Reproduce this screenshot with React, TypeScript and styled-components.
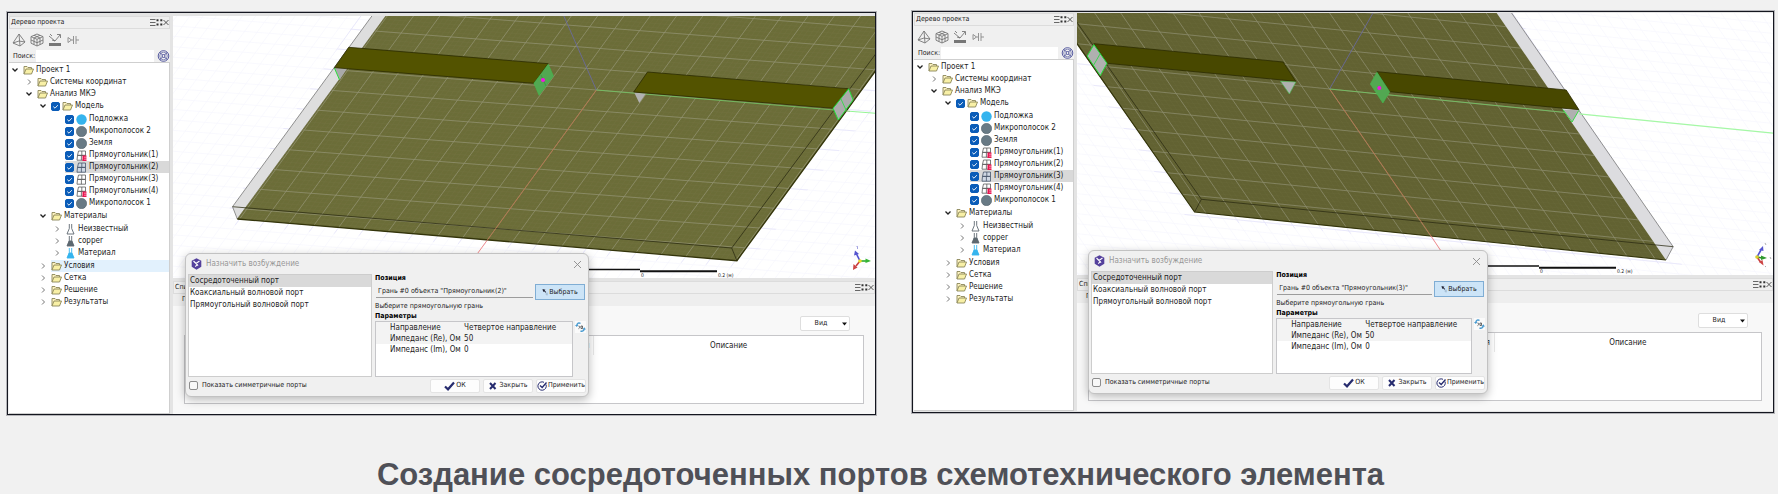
import React from "react";
import styled, { createGlobalStyle } from "styled-components";

const GlobalStyle = createGlobalStyle`
  * { box-sizing: border-box; }
  body { margin: 0; background: #f1f1f1; }
  ul { list-style: none; margin: 0; padding: 0; }
  button, input, select, table { font: inherit; color: inherit; }
`;

const uiFont = `"DejaVu Sans Condensed", Roboto, sans-serif`;

const Page = styled.main`
  padding: 11px 4px 0 7px;
  font-family: ${uiFont};
  font-size: 7px;
  line-height: 11px;
  color: #1c1c1c;
`;

const Windows = styled.div`
  display: grid;
  grid-template-columns: 869fr 862fr;
  column-gap: 36px;
  align-items: start;
`;

const Caption = styled.h1`
  margin: 42px 0 0;
  padding-right: 20px;
  text-align: center;
  font: bold 31px/36px "Liberation Sans", Arial, sans-serif;
  color: #4f5057;
`;

const AppWindow = styled.section<{ $first: boolean }>`
  position: relative;
  display: grid;
  grid-template-columns: ${(p) => (p.$first ? 162 : 161)}px 1fr;
  column-gap: 3px;
  margin-top: ${(p) => (p.$first ? 1 : 0)}px;
  padding: ${(p) => (p.$first ? "3px 0 0" : "1px 0")};
  border: 1px solid #14161f;
  box-shadow: 0 0 0 1px #b4b4b8;
  background: #e4e4e4;
`;

const Sidebar = styled.aside`
  display: flex;
  flex-direction: column;
  background: #f0f0f0;
  padding-left: 1px;
`;

const DockTitle = styled.header`
  display: flex;
  align-items: center;
  justify-content: space-between;
  height: 13px;
  padding: 0 0 0 1px;
  border: 1px solid #dcdcdc;
  background: #efefef;
`;

const DockName = styled.h2`
  margin: 0;
  font-size: 7px;
  line-height: 11px;
  font-weight: 400;
`;

const DockTools = styled.div`
  display: flex;
`;

const IconButton = styled.button`
  display: flex;
  padding: 0;
  border: 0;
  background: none;
`;

const Toolbar = styled.div`
  display: flex;
  align-items: center;
  gap: 4px;
  height: 21px;
  padding-left: 3px;
`;

const SearchRow = styled.div`
  display: flex;
  align-items: center;
  height: 12px;
  padding-left: 4px;
`;

const SearchInput = styled.input`
  flex: 1;
  min-width: 0;
  height: 12px;
  margin: 0 3px 0 1px;
  padding: 0 2px;
  border: 0;
  background: #fff;
`;

const Tree = styled.ul`
  flex: 1;
  padding: 1px 0 0 1px;
  border: 1px solid #cfcfcf;
  border-left: 0;
  background: #fff;
  font-size: 8px;
  line-height: 12px;
`;

const Branch = styled.ul<{ $deep: boolean }>`
  margin: ${(p) => (p.$deep ? 1 : 0)}px 0;
`;

const Node = styled.div<{ $level: number }>`
  display: flex;
  align-items: center;
  height: 12px;
  padding-left: ${(p) => p.$level * 14}px;
`;

const Chevron = styled.span`
  display: flex;
  width: 13px;
`;

const NodeBody = styled.label<{ $tone?: string }>`
  display: flex;
  flex: 1;
  align-items: center;
  gap: 2px;
  height: 12px;
  white-space: nowrap;
  background: ${(p) => p.$tone ?? "transparent"};
`;

const TickWrap = styled.span`
  position: relative;
  display: flex;
  width: 9px;
  height: 9px;
  svg { position: absolute; inset: 0; pointer-events: none; }
`;

const Tick = styled.input`
  appearance: none;
  width: 9px;
  height: 9px;
  margin: 0;
  border: 1px solid #8c8c8c;
  border-radius: 2px;
  background: #f8f8f8;
  &:checked { border-color: #0a5cb8; background: #0a5cb8; }
`;

const Workspace = styled.div`
  display: flex;
  flex-direction: column;
  min-width: 0;
`;

const SceneSvg = styled.svg`
  display: block;
  width: 100%;
  height: 262px;
  margin-bottom: 3px;
  background: #fff;
`;

const TabBand = styled.div`
  height: 12px;
  padding-left: 9px;
  background: #eeeeee;
`;

const DockBody = styled.div`
  display: flex;
  flex-direction: column;
  align-items: flex-end;
  gap: 4px;
  padding: 10px 11px;
  background: #f8f8f8;
`;

const ViewPicker = styled.span`
  position: relative;
  display: flex;
  margin-right: 14px;
  svg { position: absolute; right: 3px; top: 6px; pointer-events: none; }
`;

const ViewSelect = styled.select`
  appearance: none;
  width: 50px;
  height: 15px;
  padding: 0 8px 0 0;
  border: 1px solid #dedede;
  border-radius: 2px;
  background: #fff;
  text-align: center;
`;

const GridFrame = styled.div`
  width: 100%;
  height: 69px;
  border: 1px solid #c6c6c9;
  background: #fff;
`;

const DataTable = styled.table`
  width: 100%;
  table-layout: fixed;
  border-collapse: collapse;
  font-size: 8px;
  th { height: 19px; padding: 0 4px; font-weight: 400; }
  th:first-child { width: 60.3%; text-align: right; border-right: 1px solid #e8e8e8; }
`;

const Dialog = styled.div<{ $first: boolean }>`
  position: absolute;
  left: ${(p) => (p.$first ? 177 : 175)}px;
  top: ${(p) => (p.$first ? 240 : 238)}px;
  width: ${(p) => (p.$first ? 404 : 400)}px;
  padding: 0 2px 2px;
  border: 1px solid #c2c2c2;
  border-radius: 6px;
  background: #f0f0f0;
  box-shadow: 0 3px 10px rgba(0, 0, 0, 0.28);
`;

const DialogBar = styled.header`
  display: flex;
  align-items: center;
  gap: 4px;
  height: 20px;
  padding: 0 4px 0 3px;
`;

const DialogTitle = styled.h2`
  flex: 1;
  margin: 0;
  font-size: 8px;
  line-height: 12px;
  font-weight: 400;
  color: #979797;
`;

const DialogColumns = styled.div`
  display: grid;
  grid-template-columns: minmax(0, 185fr) minmax(0, 212fr);
  column-gap: 3px;
`;

const PortList = styled.ul`
  border: 1px solid #cdcdcd;
  background: #fff;
  font-size: 8px;
  line-height: 12px;
`;

const PortItem = styled.li<{ $active: boolean }>`
  height: 12px;
  padding-left: 1px;
  background: ${(p) => (p.$active ? "#d9d9d9" : "transparent")};
`;

const Heading = styled.h3`
  margin: 0;
  font-size: 7px;
  line-height: 9px;
  font-weight: 700;
  color: #000;
`;

const PositionRow = styled.div`
  display: flex;
  align-items: center;
  gap: 2px;
  height: 18px;
  padding-left: 1px;
`;

const FaceInput = styled.input`
  flex: 1;
  min-width: 0;
  height: 11px;
  padding: 0 2px;
  border: 0;
  border-bottom: 1px solid #9c9c9c;
  background: #f0f0f0;
`;

const PickButton = styled.button`
  display: flex;
  align-items: center;
  justify-content: center;
  gap: 1px;
  width: 50px;
  height: 16px;
  margin-right: 1px;
  padding: 0;
  border: 1px solid #7fadd4;
  background: #cce4f7;
`;

const ParamRow = styled.div`
  display: flex;
  gap: 2px;
  align-items: flex-start;
`;

const ParamFrame = styled.div`
  flex: 1;
  min-width: 0;
  height: 56px;
  border: 1px solid #c6c6c9;
  background: #fff;
`;

const ParamTable = styled.table`
  width: 100%;
  table-layout: fixed;
  border-collapse: collapse;
  font-size: 8px;
  th, td { padding: 0; font-weight: 400; text-align: left; white-space: nowrap; }
  th { width: 88px; padding-left: 14px; }
  tr:nth-child(-n + 2) { background: #f3f3f3; }
`;

const Footer = styled.footer`
  display: flex;
  align-items: center;
  gap: 3px;
  height: 17px;
`;

const SymmetryLabel = styled.label`
  display: flex;
  flex: 1;
  align-items: center;
  gap: 4px;
  padding-left: 1px;
`;

const FooterButton = styled.button`
  display: flex;
  align-items: center;
  justify-content: center;
  gap: 1px;
  width: 50px;
  height: 14px;
  padding: 0;
  border: 1px solid #e4e4e4;
  border-radius: 2px;
  background: #fdfdfd;
  svg { flex: none; }
`;

/* ---------- icons ---------- */

const DockGlyphs = () => (
  <DockTools>
    <IconButton aria-label="Меню">
      <svg width="6" height="9" viewBox="0 0 6 9"><path d="M0 1.5h5.5M0 4.5h5.5M0 7.5h5.5" stroke="#444" strokeWidth=".8" /></svg>
    </IconButton>
    <IconButton aria-label="Открепить">
      <svg width="7" height="9" viewBox="0 0 7 9"><path d="M.5 1.2h2v2h-2zM4.3 1.2h2v2h-2zM.5 5.6h2v2h-2zM4.3 5.6h2v2h-2z" fill="#333" /></svg>
    </IconButton>
    <IconButton aria-label="Закрыть панель">
      <svg width="6" height="9" viewBox="0 0 6 9"><path d="M.5 2l5 5M5.5 2l-5 5" stroke="#333" strokeWidth=".8" /></svg>
    </IconButton>
  </DockTools>
);

const ToolGlyphs = () => (
  <>
    <IconButton aria-label="Тетраэдр">
      <svg width="14" height="14" viewBox="0 0 14 14" fill="none" stroke="#777" strokeWidth=".9" strokeLinejoin="round"><path d="M7 1L1 10l7 3 5-4zM7 1l1 12M1 10l6-2 6 1" /></svg>
    </IconButton>
    <IconButton aria-label="Сетка">
      <svg width="14" height="14" viewBox="0 0 14 14" fill="none" stroke="#777" strokeWidth=".9" strokeLinejoin="round"><path d="M7 1l6 2.6v6.6L7 13l-6-2.8V3.600zM1 3.600l6 2.700 6-2.700M7 6.300V13M4 2.300l6 2.700v6.600M10 2.300L4 5v6.600M1 7l6 2.700L13 7" /></svg>
    </IconButton>
    <IconButton aria-label="Отражение">
      <svg width="14" height="14" viewBox="0 0 14 14" fill="none" stroke="#777"><path d="M1 3l6 5 5-6M9 1.500h3.500V5M2 1l2 2M4 7l3 1" strokeWidth=".9" /><path d="M1 11.500h12" strokeWidth="3" /></svg>
    </IconButton>
    <IconButton aria-label="Порт">
      <svg width="14" height="14" viewBox="0 0 14 14" fill="none" stroke="#888" strokeWidth=".9"><path d="M2 4.500v5L5.500 7zM5.500 7H7M7.500 3v8M10 3v8M10 7h3" /></svg>
    </IconButton>
  </>
);

const LifeRing = () => (
  <IconButton aria-label="Найти">
    <svg width="13" height="12" viewBox="0 0 12 12" fill="none" stroke="#454b96" strokeWidth=".9"><circle cx="6" cy="6" r="5.300" /><circle cx="6" cy="6" r="3.800" strokeWidth=".6" /><circle cx="6" cy="6" r="1.500" /><path d="M2.300 2.300L5 5M9.700 2.300L7 5M2.300 9.700L5 7M9.700 9.700L7 7" /></svg>
  </IconButton>
);

const Folder = () => (
  <svg width="11" height="10" viewBox="0 0 11 10" strokeLinejoin="round"><path d="M1 9V1.500h3l1 1h3.500V4" fill="#fdf3c0" stroke="#8b8759" strokeWidth=".9" /><path d="M1 9l2-5h7.500L8.500 9z" fill="#f8f0a6" stroke="#8b8759" strokeWidth=".9" /></svg>
);

const Ball = ({ color }: { color: string }) => (
  <svg width="11" height="11" viewBox="0 0 11 11"><circle cx="5.500" cy="5.500" r="5.200" fill={color} stroke="#4e5d66" strokeWidth={color === "#35b4ee" ? 0 : 0.5} /></svg>
);

const Rect = ({ marked, tint }: { marked?: boolean; tint?: boolean }) => (
  <svg width="11" height="11" viewBox="0 0 11 11">
    <path d="M2.500 1h3.300v4.400H1.500zM5.800 1h3.700v4.400H5.800M1.500 5.400h8v4.800H1zM5.400 5.400v4.800" fill={tint ? "#cfd8e4" : "#fff"} stroke={tint ? "#46566b" : "#5a5a5a"} strokeWidth=".8" />
    {marked && <path d="M6.500 5.500h4v5.500h-4z" fill="#ea1550" />}
    {marked && <path d="M8 7.200h3M8 9.200h3" stroke="#fff" strokeWidth=".5" />}
  </svg>
);

const Flask = ({ fill }: { fill: string }) => (
  <svg width="11" height="12" viewBox="0 0 11 12">
    <path d="M4 5.500h3l2 5.500H2z" fill={fill} />
    <path d="M4.300 1v4.500L2 11h7L6.700 5.500V1" fill="none" stroke={fill === "#35b4ee" ? "#35b4ee" : "#5d6870"} strokeWidth=".9" />
  </svg>
);

const Arrow = ({ open }: { open?: boolean }) => (
  <svg width="10" height="10" viewBox="0 0 10 10" fill="none" stroke={open ? "#222" : "#777"} strokeWidth={open ? 1.3 : 1}><path d={open ? "M2.500 3.500L5 6l2.500-2.500" : "M4 2.500L6.500 5 4 7.500"} /></svg>
);

const Logo = () => (
  <svg width="11" height="12" viewBox="0 0 11 12"><path d="M5.500 .3l4.800 2.400v6L5.500 11.700.7 8.700v-6z" fill="#54409c" /><path d="M2.500 3l2.500 2.500L8.500 3M5 5.500l1.200 1L4.300 8.600M6.200 6.500l.8 1.200" fill="none" stroke="#fff" strokeWidth="1.100" /></svg>
);

/* ---------- project tree ---------- */

const CheckBox = () => (
  <TickWrap>
    <Tick type="checkbox" defaultChecked />
    <svg width="9" height="9" viewBox="0 0 9 9"><path d="M2.300 4.600L4 6.200l2.800-3" fill="none" stroke="#fff" strokeWidth=".9" /></svg>
  </TickWrap>
);

type ItemProps = {
  level: number;
  text: string;
  icon?: React.ReactNode;
  open?: boolean;
  leaf?: boolean;
  check?: boolean;
  tone?: string;
  children?: React.ReactNode;
};

const Item = ({ level, text, icon = <Folder />, open, leaf, check, tone, children }: ItemProps) => (
  <li>
    <Node $level={level}>
      <Chevron>{!leaf && <Arrow open={open} />}</Chevron>
      <NodeBody as={check ? "label" : "span"} $tone={tone}>
        {check && <CheckBox />}
        {icon}
        {text}
      </NodeBody>
    </Node>
    {children && <Branch $deep={level === 2}>{children}</Branch>}
  </li>
);

const ProjectTree = ({ selected, marked }: { selected: number; marked: number[] }) => (
  <Tree>
    <Item level={0} text="Проект 1" open>
      <Item level={1} text="Системы координат" />
      <Item level={1} text="Анализ МКЭ" open>
        <Item level={2} text="Модель" open check>
          <Item level={3} leaf check icon={<Ball color="#35b4ee" />} text="Подложка" />
          <Item level={3} leaf check icon={<Ball color="#687a85" />} text="Микрополосок 2" />
          <Item level={3} leaf check icon={<Ball color="#687a85" />} text="Земля" />
          {[1, 2, 3, 4].map((n) => (
            <Item
              key={n}
              level={3}
              leaf
              check
              icon={<Rect marked={marked.includes(n)} tint={n === selected} />}
              text={`Прямоугольник(${n})`}
              tone={n === selected ? "#d9d9d9" : undefined}
            />
          ))}
          <Item level={3} leaf check icon={<Ball color="#687a85" />} text="Микрополосок 1" />
        </Item>
        <Item level={2} text="Материалы" open>
          <Item level={3} icon={<Flask fill="#fff" />} text="Неизвестный" />
          <Item level={3} icon={<Flask fill="#5d6870" />} text="copper" />
          <Item level={3} icon={<Flask fill="#35b4ee" />} text="Материал" />
        </Item>
        <Item level={2} text="Условия" tone={selected === 2 ? "#e2f1fd" : undefined} />
        <Item level={2} text="Сетка" />
        <Item level={2} text="Решение" />
        <Item level={2} text="Результаты" />
      </Item>
    </Item>
  </Tree>
);

/* ---------- 3D scenes ---------- */

type GridSpec = { ox: number; oy: number; slope: number; lean: number; stepX: number; stepY: number };

const gridPath = (g: GridSpec, divide: number) => {
  const parts: string[] = [];
  const reach = 34 * divide;
  for (let k = -reach; k <= reach; k++) {
    const y = g.oy + (g.stepY / divide) * k;
    parts.push(`M${g.ox - 800} ${y - 800 * g.slope}L${g.ox + 800} ${y + 800 * g.slope}`);
    const x = g.ox + (g.stepX / divide) * k;
    parts.push(`M${x - 300 * g.lean} ${g.oy - 300}L${x + 300 * g.lean} ${g.oy + 300}`);
  }
  return parts.join("");
};

const Grids = ({ g, id, board, ground }: { g: GridSpec; id: string; board: string; ground: string }) => (
  <>
    <defs>
      <clipPath id={`${id}-board`}><polygon points={board} /></clipPath>
      <clipPath id={`${id}-ground`}><polygon points={ground} /></clipPath>
    </defs>
    <path d={gridPath(g, 2)} stroke="#f7f7fd" strokeWidth=".7" />
    <g clipPath={`url(#${id}-ground)`}><path d={gridPath(g, 1)} stroke="#e6e5fa" strokeWidth=".8" /></g>
  </>
);

const BoardGrid = ({ g, id }: { g: GridSpec; id: string }) => (
  <g clipPath={`url(#${id}-board)`}>
    <path d={gridPath(g, 5)} stroke="#a0a080" strokeWidth=".5" opacity=".1" />
    <path d={gridPath(g, 1)} stroke="#b8b8aa" strokeWidth=".8" opacity=".46" />
  </g>
);

const ScaleBar = ({ x, y }: { x: number; y: number }) => (
  <g>
    <path d={`M${x - 60} ${y}h60`} stroke="#111" strokeWidth="1.500" />
    <path d={`M${x} ${y + 1.7}h77`} stroke="#111" strokeWidth="2" />
    <text x={x + 1} y={y + 7} fontSize="5" fill="#222">0</text>
    <text x={x + 78} y={y + 7} fontSize="5" fill="#222">0.2 (м)</text>
  </g>
);

const boardOne = "386.500,15 876,15 876,70.300 736.900,260.700 237.300,219";
const gridOne: GridSpec = { ox: 596.4, oy: 90, slope: 0.0775, lean: -0.727, stepX: 26.3, stepY: 20.9 };

const SceneOne = () => (
  <SceneSvg viewBox="173 16 702 262" preserveAspectRatio="xMinYMin slice" role="img" aria-label="Трёхмерная модель">
    <Grids g={gridOne} id="one" board={boardOne} ground="370,0 960,0 745,268 219,224" />
    <polygon points="372.600,15 386.500,15 237.300,219 232.500,206.700" fill="#dedede" />
    <path d="M372.600 15L232.500 206.700L237.300 219" fill="none" stroke="#777" strokeWidth=".8" />
    <polygon points={boardOne} fill="#6d6e39" />
    <BoardGrid g={gridOne} id="one" />
    <path d="M237.300 219L736.900 260.700L876 70.300" fill="none" stroke="#33340a" strokeWidth="1.300" />
    <path d="M237.300 219L386.500 15" stroke="#55562a" strokeWidth=".6" />
    <path d="M232.500 206.700L731.700 248L736.900 260.700M731.700 248L876 53.500" fill="none" stroke="#2b2b12" strokeWidth=".9" opacity=".85" />
    <path d="M596.400 90L563.400 15" stroke="#6a6aa8" strokeWidth=".8" />
    <path d="M596.400 90L540 167.600L487 240.500" stroke="#b9764f" strokeWidth=".9" />
    <path d="M487 240.500L477.500 253.500" stroke="#f08080" strokeWidth=".9" />
    <path d="M596.400 90L850 111.300" stroke="#74c063" strokeWidth=".9" />
    <path d="M850 111.300L876 113.300" stroke="#96f596" strokeWidth="1" />
    <polygon points="334.400,68 346.600,69 339.600,80" fill="#aaa" />
    <path d="M334.400 68l5.200 12" stroke="#2adf3a" strokeWidth="1" />
    <polygon points="348.700,47.300 548.200,63.700 533.900,83.300 334.400,67.700" fill="#535300" stroke="#2b2b00" strokeWidth=".8" />
    <polygon points="548.200,64.300 553.400,76 539.100,95.300 533.900,83.300" fill="#52a852" stroke="#3fbf4d" strokeWidth=".6" />
    <path d="M541 75l5 11" stroke="#3a8f3f" strokeWidth=".7" />
    <circle cx="543" cy="80" r="2" fill="#f414e4" />
    <polygon points="634.200,92.500 645.800,93.700 639.300,103" fill="#b2b2b2" />
    <polygon points="647.500,72 848.700,88.700 833.100,108.300 633.700,92" fill="#535300" stroke="#2b2b00" strokeWidth=".8" />
    <polygon points="848.700,88.700 853.100,100 838.300,120 833.100,108.300" fill="#ababab" stroke="#22e03a" strokeWidth="1" />
    <path d="M841 99l5 11" stroke="#22e03a" strokeWidth=".8" />
    <ScaleBar x={640} y={269.5} />
    <path d="M860 261l-3.500-7" stroke="#5050d0" strokeWidth="1.600" /><path d="M854 255.500l1-5 4 3.500z" fill="#5555cf" />
    <path d="M860 261h6" stroke="#2ea82e" strokeWidth="1.600" /><path d="M865.500 258.500l5.500 2.500-5.500 2z" fill="#35b535" />
    <path d="M860 261l-4 5" stroke="#c83c3c" strokeWidth="1.600" /><path d="M853.500 264l4 3.500-4.500 2.500z" fill="#cc4444" />
    <path d="M856.500 246.500h1v2.500" stroke="#6666cc" strokeWidth=".6" fill="none" />
    <circle cx="860" cy="261" r="1.800" fill="#e6dc28" />
  </SceneSvg>
);

const boardTwo = "1076,13 1496.700,13 1666,260 1194.600,212 1076,43.300";
const gridTwo: GridSpec = { ox: 1329.6, oy: 89, slope: 0.1001, lean: 0.687, stepX: 26.1, stepY: 20 };

const SceneTwo = () => (
  <SceneSvg viewBox="1077 13 696 262" preserveAspectRatio="xMinYMin slice" role="img" aria-label="Трёхмерная модель">
    <Grids g={gridTwo} id="two" board={boardTwo} ground="1040,13 1515,13 1683,266 1187,218 1040,10" />
    <polygon points="1496.700,13 1511.600,13 1673.200,246.700 1666,260" fill="#dcdcdf" />
    <path d="M1511.600 13L1673.200 246.700L1666 260" fill="none" stroke="#777" strokeWidth=".8" />
    <polygon points={boardTwo} fill="#626333" />
    <BoardGrid g={gridTwo} id="two" />
    <path d="M1076 42L1194.600 212L1666 260" fill="none" stroke="#33340a" strokeWidth="1.200" />
    <path d="M1076 21L1201.400 199.300L1673.200 246.700M1201.400 199.300L1194.600 212" fill="none" stroke="#2b2b12" strokeWidth=".9" opacity=".85" />
    <path d="M1329.600 89L1373 13" stroke="#6a6aa8" strokeWidth=".8" />
    <path d="M1329.600 89L1431 236" stroke="#b9764f" strokeWidth=".9" />
    <path d="M1431 236L1441 251" stroke="#f08080" strokeWidth=".9" />
    <path d="M1329.600 89L1566 112.500" stroke="#74c063" strokeWidth=".9" />
    <path d="M1579 113.800L1774 133.300" stroke="#a5f8a5" strokeWidth="1.200" />
    <polygon points="1093.900,43.700 1283.100,62 1295.800,81.300 1107,63.300" fill="#484800" stroke="#2b2b00" strokeWidth=".8" />
    <polygon points="1093.900,44.700 1107,63.300 1100.300,75.700 1087.200,56" fill="#b0b0b0" stroke="#22e03a" strokeWidth="1" />
    <path d="M1100 54l-6.300 11" stroke="#22e03a" strokeWidth=".8" />
    <polygon points="1280.500,81.300 1295.800,82 1289.400,94" fill="#b0b0b0" stroke="#49c455" strokeWidth=".6" />
    <polygon points="1377,71.700 1566.200,90 1578.900,109.700 1389.700,91.700" fill="#484800" stroke="#2b2b00" strokeWidth=".8" />
    <polygon points="1377,72.300 1389.700,91.700 1382.900,103 1370.300,84" fill="#52a852" stroke="#3fbf4d" strokeWidth=".6" />
    <circle cx="1379.300" cy="88" r="2" fill="#f414e4" />
    <polygon points="1563,109.700 1578.900,110.300 1572.100,122" fill="#b0b0b0" />
    <path d="M1563 109.700L1572.100 122L1578.900 110.300" fill="none" stroke="#2adf3a" strokeWidth=".9" />
    <ScaleBar x={1539} y={266} />
    <path d="M1757 257l4-7" stroke="#5050d0" strokeWidth="1.600" /><path d="M1759 250l4-4 .5 5z" fill="#5555cf" />
    <path d="M1757 257l5 1" stroke="#2e8b2e" strokeWidth="1.600" /><path d="M1761 255.500l6 2.500-6 2z" fill="#2f9a2f" />
    <path d="M1757 257l3.500 5" stroke="#c83c3c" strokeWidth="1.600" /><path d="M1759 262l3.500-2 1 5.500z" fill="#cc4444" />
    <path d="M1765 243l1 2M1770 257l1 2M1765 266l1 1" stroke="#777" strokeWidth=".6" />
    <circle cx="1757" cy="257" r="1.800" fill="#d8d028" />
  </SceneSvg>
);

/* ---------- dialog ---------- */

const ports = ["Сосредоточенный порт", "Коаксиальный волновой порт", "Прямоугольный волновой порт"];
const params = [
  ["Направление", "Четвертое направление"],
  ["Импеданс (Re), Ом", "50"],
  ["Импеданс (Im), Ом", "0"],
];

const ExcitationDialog = ({ first, face }: { first: boolean; face: number }) => (
  <Dialog $first={first} role="dialog" aria-label="Назначить возбуждение">
    <DialogBar>
      <Logo />
      <DialogTitle>Назначить возбуждение</DialogTitle>
      <IconButton aria-label="Закрыть окно">
        <svg width="9" height="9" viewBox="0 0 9 9"><path d="M1 1l7 7M8 1L1 8" stroke="#8a8a8a" strokeWidth=".9" /></svg>
      </IconButton>
    </DialogBar>
    <DialogColumns>
      <PortList>
        {ports.map((p, i) => (
          <PortItem key={p} $active={i === 0}>{p}</PortItem>
        ))}
      </PortList>
      <div>
        <Heading>Позиция</Heading>
        <PositionRow>
          <FaceInput aria-label="Позиция" readOnly value={`Грань #0 объекта "Прямоугольник(${face})"`} />
          <PickButton>
            <svg width="6" height="8" viewBox="0 0 6 8"><path d="M.5 1l3 .8-.9.8 1.600 1.500-.6.600L2 3.200l-.8.900z" fill="#223" /><path d="M3.500 6h2M5 4.500v3" stroke="#7a92aa" strokeWidth=".5" /></svg>
            Выбрать
          </PickButton>
        </PositionRow>
        <div>Выберите прямоугольную грань</div>
        <Heading>Параметры</Heading>
        <ParamRow>
          <ParamFrame>
            <ParamTable>
              <tbody>
                {params.map(([name, value]) => (
                  <tr key={name}><th scope="row">{name}</th><td>{value}</td></tr>
                ))}
              </tbody>
            </ParamTable>
          </ParamFrame>
          <IconButton aria-label="Повернуть на 90°">
            <svg width="11" height="12" viewBox="0 0 11 12"><rect width="11" height="12" fill="#fafafa" /><path d="M5.500 2.500C4 1.300 2 2 1.800 4.500M5.500 9.800c1.800 1 3.500 0 3.700-2" fill="none" stroke="#4a9bd0" strokeWidth="1.500" /><path d="M0 4h3.500L1.700 6zM7.500 8.500H11L9.300 6.300z" fill="#4a9bd0" /><path d="M3.500 5.200c1.500-1 1.800 2 0 2.500M6 5v2.500h1.500V5z" fill="none" stroke="#333" strokeWidth=".7" /></svg>
          </IconButton>
        </ParamRow>
      </div>
    </DialogColumns>
    <Footer>
      <SymmetryLabel>
        <Tick type="checkbox" />
        Показать симметричные порты
      </SymmetryLabel>
      <FooterButton>
        <svg width="11" height="10" viewBox="0 0 11 10"><path d="M1 5.500l3 2.800L10 1.500" fill="none" stroke="#262b6e" strokeWidth="2.200" /></svg>
        ОК
      </FooterButton>
      <FooterButton>
        <svg width="10" height="10" viewBox="0 0 10 10"><path d="M2 2l5.500 6M7.500 2L2 8" stroke="#262b6e" strokeWidth="2" /></svg>
        Закрыть
      </FooterButton>
      <FooterButton>
        <svg width="10" height="10" viewBox="0 0 10 10" fill="none" stroke="#262b6e"><path d="M9 3.500A4.200 4.200 0 1 1 7 1.300" strokeWidth="1" /><path d="M3 4.500l2.200 2L9.500 1.500" strokeWidth="1.300" /></svg>
        Применить
      </FooterButton>
    </Footer>
  </Dialog>
);

const ProjectWindow = ({ first, face, marked }: { first: boolean; face: number; marked: number[] }) => {
  const id = `search-${face}`;
  return (
    <AppWindow $first={first}>
      <Sidebar>
        <DockTitle>
          <DockName>Дерево проекта</DockName>
          <DockGlyphs />
        </DockTitle>
        <Toolbar><ToolGlyphs /></Toolbar>
        <SearchRow>
          <label htmlFor={id}>Поиск:</label>
          <SearchInput id={id} />
          <LifeRing />
        </SearchRow>
        <ProjectTree selected={face} marked={marked} />
      </Sidebar>
      <Workspace>
        {first ? <SceneOne /> : <SceneTwo />}
        <DockTitle>
          <DockName>Спи</DockName>
          <DockGlyphs />
        </DockTitle>
        <TabBand>П</TabBand>
        <DockBody>
          <ViewPicker>
            <ViewSelect aria-label="Вид"><option>Вид</option></ViewSelect>
            <svg width="5" height="4" viewBox="0 0 5 4"><path d="M0 .5h5L2.500 3.500z" fill="#111" /></svg>
          </ViewPicker>
          <GridFrame>
            <DataTable>
              <thead><tr><th scope="col">я</th><th scope="col">Описание</th></tr></thead>
            </DataTable>
          </GridFrame>
        </DockBody>
      </Workspace>
      <ExcitationDialog first={first} face={face} />
    </AppWindow>
  );
};

export default function App() {
  return (
    <>
      <GlobalStyle />
      <Page>
        <Windows>
          <ProjectWindow first face={2} marked={[1, 4]} />
          <ProjectWindow first={false} face={3} marked={[1, 2, 4]} />
        </Windows>
        <Caption>Создание сосредоточенных портов схемотехнического элемента</Caption>
      </Page>
    </>
  );
}
